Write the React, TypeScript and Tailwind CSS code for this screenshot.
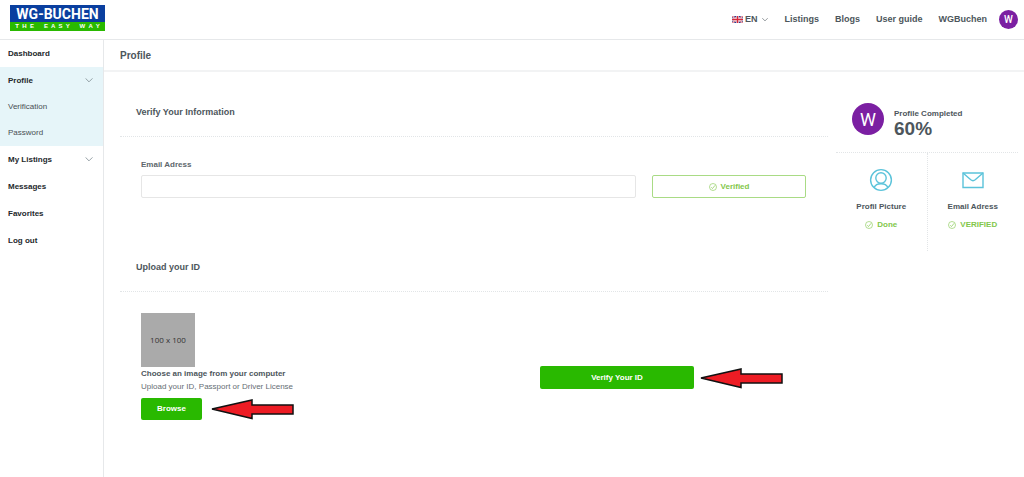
import type { ReactNode } from 'react';

interface IconProps {
  className?: string;
}

function Chevron({ className = '' }: IconProps) {
  return (
    <svg viewBox="0 0 10 6" className={className} fill="none" stroke="currentColor" aria-hidden="true">
      <path d="M1 0.8 5 4.8 9 0.8" strokeLinecap="round" />
    </svg>
  );
}

function CheckCircle({ className = '' }: IconProps) {
  return (
    <svg viewBox="0 0 16 16" className={className} fill="none" stroke="currentColor" aria-hidden="true">
      <circle cx="8" cy="8" r="7" strokeWidth="1.2" />
      <path d="M4.5 8.6 7 11 12.2 4.6" strokeWidth="1.4" />
    </svg>
  );
}

function UserIcon() {
  return (
    <svg viewBox="0 0 24 24" className="size-6" fill="none" stroke="#5bc3da" strokeWidth="1.4" aria-hidden="true">
      <circle cx="12" cy="12" r="10.4" />
      <circle cx="12" cy="10" r="5.2" />
      <path d="M5 19.6c1.2-2.6 3.8-3.9 7-3.9s5.8 1.3 7 3.9" />
    </svg>
  );
}

function MailIcon() {
  return (
    <svg viewBox="0 0 24 24" className="size-6" fill="none" stroke="#5bc3da" strokeWidth="1.4" aria-hidden="true">
      <path d="M2 5h20v14.5H2z" />
      <path d="m2 5 7.8 6.8c1.4 1.1 3 1.100 4.400 0L22 5" />
    </svg>
  );
}

function Flag() {
  return (
    <svg viewBox="0 0 22 14" className="h-[7px] w-[11px]" aria-hidden="true">
      <path fill="#2b3a8c" d="M0 0h22v14H0z" />
      <path stroke="#fff" strokeWidth="3" d="m0 0 22 14M22 0 0 14" />
      <path stroke="#d8283a" strokeWidth="1.4" d="m0 0 22 14M22 0 0 14" />
      <path stroke="#fff" strokeWidth="5" d="M11 0v14M0 7h22" />
      <path stroke="#d8283a" strokeWidth="3" d="M11 0v14M0 7h22" />
    </svg>
  );
}

function Arrow() {
  return (
    <svg viewBox="0 0 86 22" className="h-[22px] w-[86px] shrink-0" aria-hidden="true">
      <path
        d="M3 11 43 2v5h41v9H43v4.500z"
        fill="#ed1c24"
        stroke="#111"
        strokeWidth="1.5"
      />
    </svg>
  );
}

function Logo() {
  return (
    <a href="#" className="flex w-[95px] flex-col text-center text-white">
      <span className="h-[17px] bg-[#0a3f9f] font-['Roboto'] text-[14px] leading-[18px] font-bold">WG-BUCHEN</span>
      <span className="h-[9px] bg-[#29b900] text-[6px] leading-2 font-bold whitespace-pre">
        {'T  H  E      E  A  S  Y      W  A  Y'}
      </span>
    </a>
  );
}

function Avatar({ className }: { className: string }) {
  return (
    <span className={`flex items-center justify-center rounded-full bg-[#7b1fa2] font-['Roboto'] text-white ${className}`}>
      W
    </span>
  );
}

const navLinks = ['Listings', 'Blogs', 'User guide', 'WGBuchen'];

function Header() {
  return (
    <header className="flex h-10 items-center justify-between border-b border-[#e6e8ea] pr-1.5 pl-2.5">
      <div className="-mt-1">
        <Logo />
      </div>
      <nav className="flex items-center text-[9px] font-bold text-[#4d565c]">
        <button type="button" className="mr-4 flex items-center gap-0.5">
          <Flag />
          EN
          <Chevron className="ml-[3px] w-1.5" />
        </button>
        {navLinks.map((link) => (
          <a key={link} href="#" className="mr-4 last-of-type:mr-3">
            {link}
          </a>
        ))}
        <Avatar className="size-[19px] text-[10px] font-medium" />
      </nav>
    </header>
  );
}

function SideLink({ label, expandable = false }: { label: string; expandable?: boolean }) {
  return (
    <a href="#" className="flex h-[27px] items-center justify-between pr-2.5 pl-2 font-bold text-[#24282b]">
      {label}
      {expandable && <Chevron className="w-2 text-[#7c8a90]" />}
    </a>
  );
}

function Sidebar() {
  return (
    <aside className="w-[104px] shrink-0 border-r border-[#e6e8ea] text-[8px]">
      <ul>
        <li>
          <SideLink label="Dashboard" />
        </li>
        <li className="bg-[#e6f5f9]">
          <SideLink label="Profile" expandable />
          <ul className="text-[#484f54]">
            {['Verification', 'Password'].map((label) => (
              <li key={label}>
                <a href="#" className="flex h-[26px] items-center pl-2">
                  {label}
                </a>
              </li>
            ))}
          </ul>
        </li>
        <li>
          <SideLink label="My Listings" expandable />
        </li>
        <li>
          <SideLink label="Messages" />
        </li>
        <li>
          <SideLink label="Favorites" />
        </li>
        <li>
          <SideLink label="Log out" />
        </li>
      </ul>
    </aside>
  );
}

function Section({ title, children }: { title: string; children: ReactNode }) {
  return (
    <section>
      <h2 className="border-b border-dotted border-[#e2e5e7] px-4 pt-4 pb-[18px] text-[9px] leading-3 font-bold text-[#4d565c]">
        {title}
      </h2>
      <div className="pr-[22px] pl-[21px]">{children}</div>
    </section>
  );
}

function StatusCard({ icon, label, status }: { icon: ReactNode; label: string; status: string }) {
  return (
    <div className="flex h-[98px] flex-1 flex-col items-center pt-[15px] text-[8px] leading-2.5 font-bold">
      {icon}
      <span className="mt-2.5 text-[#4d565c]">{label}</span>
      <span className="mt-2 flex items-center gap-1 text-[#82c74b]">
        <CheckCircle className="size-2" />
        {status}
      </span>
    </div>
  );
}

function Summary() {
  return (
    <aside className="mt-[31px] w-[182px] shrink-0">
      <div className="flex h-[50px] items-start gap-2.5 border-b border-dotted border-[#e2e5e7] pl-4">
        <Avatar className="size-8 text-[18px]" />
        <div className="pt-1.5 font-bold text-[#4d565c]">
          <p className="text-[8px] leading-2.5">Profile Completed</p>
          <p className="text-[19px] leading-5">60%</p>
        </div>
      </div>
      <div className="flex divide-x divide-dotted divide-[#e2e5e7]">
        <StatusCard icon={<UserIcon />} label="Profil Picture" status="Done" />
        <StatusCard icon={<MailIcon />} label="Email Adress" status="VERIFIED" />
      </div>
    </aside>
  );
}

export default function App() {
  return (
    <div className="flex min-h-screen flex-col bg-white font-['Liberation_Sans',Arial,sans-serif]">
      <Header />
      <div className="flex flex-1">
        <Sidebar />
        <main className="min-w-0 flex-1">
          <h1 className="h-8 border-b-2 border-[#f2f3f4] pl-4 text-[10px] leading-8 font-bold text-[#4d565c]">
            Profile
          </h1>
          <div className="flex gap-2 pr-1.5 pl-4">
            <div className="min-w-0 flex-1 pt-[18px]">
              <Section title="Verify Your Information">
                <div className="flex items-end gap-4 pt-[23px]">
                  <div className="flex-1 text-[8px]">
                    <label htmlFor="email" className="mb-[5px] block leading-2.5 font-bold text-[#5d666c]">
                      Email Adress
                    </label>
                    <input
                      id="email"
                      type="email"
                      className="block h-[23px] w-full rounded-xs border border-[#e6e6e6] px-2 outline-none"
                    />
                  </div>
                  <button
                    type="button"
                    className="flex h-[23px] w-[154px] items-center justify-center gap-1 rounded-xs border border-[#a9db85] text-[8px] font-bold text-[#82c74b]"
                  >
                    <CheckCircle className="size-2" />
                    Verified
                  </button>
                </div>
              </Section>

              <div className="mt-[47px]">
                <Section title="Upload your ID">
                  <div className="flex items-start justify-between pt-[21px] text-[8px]">
                    <div>
                      <div className="flex size-[54px] items-center justify-center bg-[#aaa] font-['Open_Sans'] text-[8px] text-[#333]">
                        100 x 100
                      </div>
                      <p className="mt-0.5 leading-2.5 font-bold text-[#4d565c]">Choose an image from your computer</p>
                      <p className="mt-[3px] leading-2.5 text-[#666e74]">Upload your ID, Passport or Driver License</p>
                      <div className="mt-1.5 flex items-center gap-[7px]">
                        <button type="button" className="h-[22px] w-[61px] rounded-xs bg-[#29b900] font-bold text-white">
                          Browse
                        </button>
                        <Arrow />
                      </div>
                    </div>
                    <div className="mt-[53px] mr-[22px] flex items-center gap-1">
                      <button type="button" className="h-[23px] w-[154px] rounded-xs bg-[#29b900] font-bold text-white">
                        Verify Your ID
                      </button>
                      <Arrow />
                    </div>
                  </div>
                </Section>
              </div>
            </div>
            <Summary />
          </div>
        </main>
      </div>
    </div>
  );
}
